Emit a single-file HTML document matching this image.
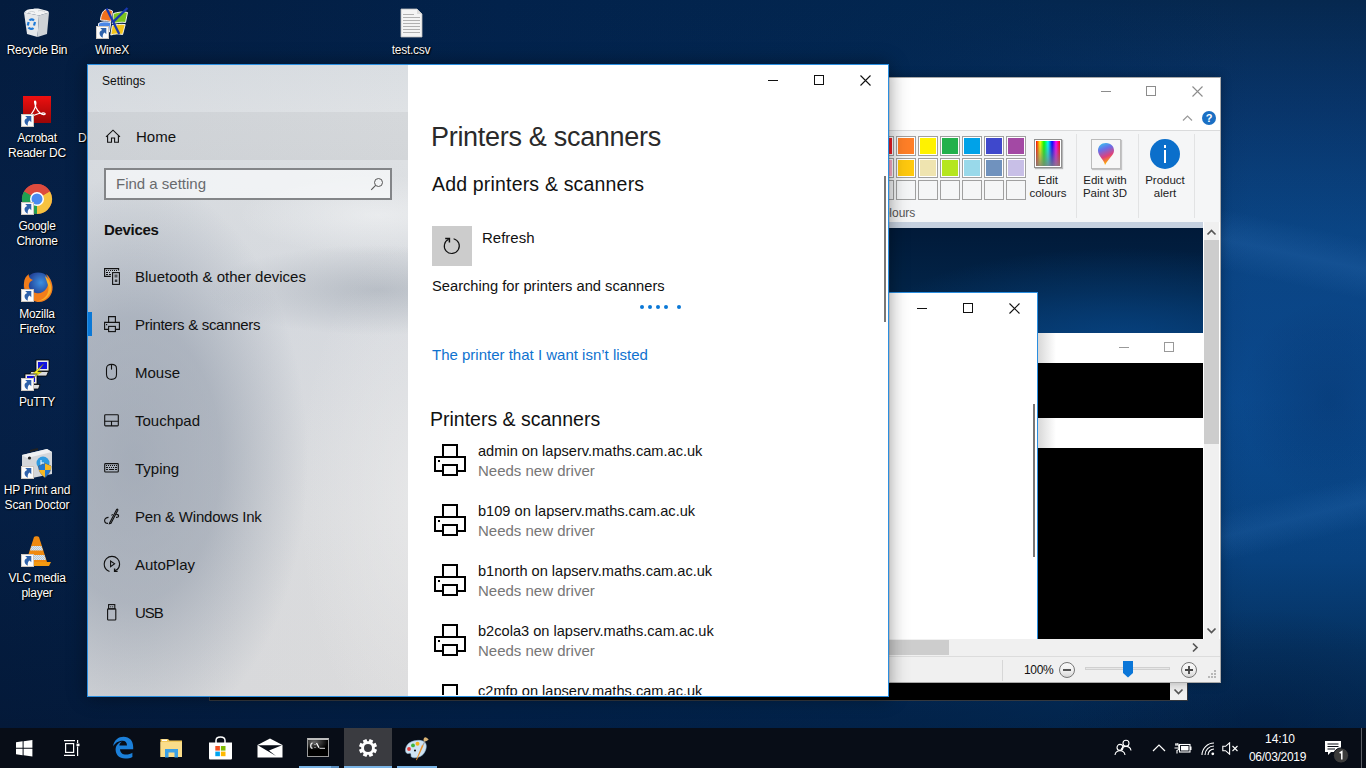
<!DOCTYPE html>
<html><head><meta charset="utf-8">
<style>
*{box-sizing:border-box;margin:0;padding:0}
html,body{width:1366px;height:768px;overflow:hidden}
body{position:relative;font-family:"Liberation Sans",sans-serif;background:#021c3c}
.a{position:absolute}
#desk{left:0;top:0;width:1366px;height:768px;
background:
 linear-gradient(180deg, rgba(12,50,110,0.0) 0px, rgba(12,50,110,0.22) 330px, rgba(12,50,110,0.1) 520px, rgba(0,5,20,0.12) 728px),
 linear-gradient(90deg, #041c3e 0px, #02224b 500px, rgba(2,38,80,0.9) 900px, rgba(4,40,84,0) 1250px),
 linear-gradient(180deg, #06284f 0px, #08356a 110px, #0a4888 230px, #0a4e94 400px, #084482 560px, #053566 650px, #032c58 728px);
}
.t{line-height:1;white-space:nowrap}
.ico-t{color:#fff;font-size:12px;letter-spacing:-0.25px;line-height:15px;text-align:center;text-shadow:0 0 2px #000,1px 1px 1px #000;width:76px}
</style></head><body>
<div id="desk" class="a"></div>
<div class="a" style="left:0;top:0;width:1366px;height:728px;overflow:hidden">
 <div class="a" style="left:1000px;top:215px;width:500px;height:60px;transform:rotate(12deg);background:linear-gradient(180deg,rgba(70,140,215,0) 0%,rgba(70,140,215,0.16) 50%,rgba(70,140,215,0) 100%)"></div>
 <div class="a" style="left:1000px;top:505px;width:500px;height:50px;transform:rotate(-14deg);background:linear-gradient(180deg,rgba(70,140,215,0) 0%,rgba(70,140,215,0.14) 50%,rgba(70,140,215,0) 100%)"></div>
 <div class="a" style="left:1220px;top:300px;width:146px;height:200px;background:radial-gradient(ellipse 90px 100px at 110px 100px, rgba(0,20,60,0.18), rgba(0,20,60,0))"></div>
 <div class="a" style="left:1000px;top:560px;width:366px;height:168px;background:radial-gradient(ellipse 200px 120px at 260px 168px, rgba(0,15,45,0.3), rgba(0,15,45,0))"></div>
</div>

<!-- desktop icons -->
<svg class="a" style="left:0;top:0" width="460" height="620" viewBox="0 0 460 620">
<defs>
 <g id="sc"><rect x="0.5" y="0.5" width="12" height="12" fill="#fbfbfb" stroke="#cfc8c0"/><path d="M4.2 2 H10.3 V8.3 L8.6 6.6 C7.2 7.6 6.4 9.2 6.8 11.8 C4.4 10.6 3.2 8.6 3.6 6.6 C3.9 5.4 5 4.4 6.2 3.9 Z" fill="#2f62aa"/></g>
 <radialGradient id="ffg" cx="0.6" cy="0.35" r="0.6"><stop offset="0" stop-color="#3d8fe0"/><stop offset="0.7" stop-color="#23459a"/><stop offset="1" stop-color="#1c3b7a"/></radialGradient>
 <linearGradient id="acr" x1="0" y1="0" x2="0" y2="1"><stop offset="0" stop-color="#ee1010"/><stop offset="1" stop-color="#9a0606"/></linearGradient>
 <pattern id="chk" width="2" height="2" patternUnits="userSpaceOnUse"><rect width="2" height="2" fill="#dde8f0"/><rect width="1" height="1" fill="#b8c6d2"/><rect x="1" y="1" width="1" height="1" fill="#b8c6d2"/></pattern>
</defs>
<!-- recycle bin -->
<path d="M24 12.5 L39 15.5 L37.5 37 L27 34 Z" fill="#e6e8ea"/>
<path d="M39 15.5 L49 12.5 L47 34 L37.5 37 Z" fill="#cfd3d7"/>
<path d="M24 12.5 C26 9.5 30 8.5 33 9 C36 8 41 9 44 10 C47 10.5 49 11.5 49 12.5 L39 15.5 Z" fill="#f2f3f4"/>
<path d="M28 13 C30 11 33 11 35 12.5 M38 11 C40 10 43 10.5 45 12" stroke="#c4c8cc" stroke-width="0.8" fill="none"/>
<path d="M29.5 20.5 C30.5 19 32.5 19 34 20.5 M35 22 L34 25.5 M33.5 28 C32 29.5 29.5 29 28.5 27.5 M27.8 25.5 L28.6 22" fill="none" stroke="#1e7ad8" stroke-width="2.2"/>
<!-- winex -->
<g stroke="#fff" stroke-width="0.9">
<path d="M100.5 20 C101 14.5 103 10.5 106 9.5 C108 9.2 110.5 10 112.5 11 L111 21.5 C107.5 20.6 104 20.2 100.5 20 Z" fill="#f0701c"/>
<path d="M98.5 23.5 C101.5 21.5 106 21.5 110.8 22.6 L109.4 32 C106 31 102 31 98.5 32 Z" fill="#4a86e6"/>
<path d="M113.5 13.5 C117 12.5 123.5 11 127.5 12.5 L125.5 22.5 C121 21.8 116.5 22.6 112.4 23.8 Z" fill="#7cc420"/>
<path d="M112.2 25.6 C116 24.5 121 24 125.2 24.6 L122.6 34.5 C119 33.5 114.5 33.8 110.8 35 Z" fill="#f2c41a"/>
</g>
<path d="M106.6 8.5 L119.2 34" stroke="#1838b0" stroke-width="2.3" fill="none"/>
<path d="M127.5 8 L113.2 21.8" stroke="#1838b0" stroke-width="2.3" fill="none"/>
<use href="#sc" x="96" y="26"/>
<!-- test.csv -->
<path d="M401 9 H417 L422 14 V37 H401 Z" fill="#f4f4f4" stroke="#bdbdbd" stroke-width="0.8"/>
<path d="M417 9 V14 H422" fill="#dcdcdc"/>
<path d="M403 14.5H414M403 17.5H420M403 20.5H420M403 23.5H420M403 26.5H420M403 29.5H420M403 32.5H420" stroke="#a9a9a9" stroke-width="0.9"/>
<!-- acrobat -->
<rect x="23" y="96" width="28" height="27" fill="url(#acr)"/>
<path d="M35 101 C36.5 101 36 106 34 110 C32 114 29 117 27.5 118.5 C31 116.5 37 113.5 42 113 C45 112.5 46 114 44.5 114.5 C42 115.5 38 112 36 107.5 C35 104.5 34 101 35 101 Z" fill="none" stroke="#fff" stroke-width="1.2"/>
<use href="#sc" x="21" y="114"/>
<!-- chrome -->
<circle cx="37" cy="199" r="15" fill="#dd4b3e"/>
<path d="M37 199 L50 191.5 A15 15 0 0 1 37 214 Z" fill="#f6c240"/>
<path d="M37 199 L37 214 A15 15 0 0 1 24 191.5 Z" fill="#21a052"/>
<path d="M37 199 L24 191.5 A15 15 0 0 1 50 191.5 Z" fill="#dd4b3e"/>
<path d="M37 206 L30.9 195.5 L24 191.5 L30 204 Z" fill="#21a052"/>
<path d="M43.1 195.5 L50 191.5 L44 205 L37 214 Z" fill="#f6c240"/>
<circle cx="37" cy="199" r="7" fill="#fff"/><circle cx="37" cy="199" r="5.5" fill="#4a8af0"/>
<use href="#sc" x="21" y="202"/>
<!-- firefox -->
<circle cx="38" cy="287" r="14.5" fill="url(#ffg)"/>
<path d="M24 283 C23 292 30 302 39 302 C47 302 53 295 52.5 287 C52 281 49 276 46 274 C49 279 49 285 46 289 C44 292 40 294 36 293 C31 292 28 288 29 284 C30 281 33 280 33 280 C30 279 28 276 29 274 C26 276 24 279 24 283 Z" fill="#f27d1a"/>
<path d="M45 276 C50 280 52 286 51 291 C49 297 44 301 38 301 C46 299 50 292 48 285 Z" fill="#fbb02a"/>
<use href="#sc" x="21" y="289"/>
<!-- putty -->
<rect x="36" y="360" width="13" height="11" fill="#e8e8e8" stroke="#000" stroke-width="0.8"/><rect x="38" y="362" width="9" height="7" fill="#1010e0"/>
<path d="M31 371.5 H48.5 L46.5 376 H29 Z" fill="#dcdcdc" stroke="#000" stroke-width="0.8"/>
<rect x="25" y="374" width="12" height="10" fill="#e8e8e8" stroke="#000" stroke-width="0.8"/><rect x="27" y="376" width="8" height="6" fill="#1010e0"/>
<path d="M25 384.5 H40 L38.5 389 H24 Z" fill="#dcdcdc" stroke="#000" stroke-width="0.8"/>
<path d="M43.5 364 L33 373.5 L37.5 373.5 L32.5 378.5 L41.5 372 L37.5 372 Z" fill="#f8f020" stroke="#807a00" stroke-width="0.4"/>
<use href="#sc" x="21" y="378"/>
<!-- hp -->
<path d="M22 455 L47 449 L52 452 V474 L27 479 L22 476 Z" fill="#d3d6da"/>
<path d="M22 455 L47 449 L52 452 L27 458 Z" fill="#eef0f2"/>
<path d="M30 451 L38 449" stroke="#222" stroke-width="2"/><circle cx="29.5" cy="458" r="1.6" fill="#222"/>
<circle cx="43" cy="463" r="6.5" fill="#2e9ae0"/><path d="M41 460 V466 M41 463 H44 V466" stroke="#fff" stroke-width="1" fill="none"/>
<path d="M38.5 466 L45 463.5 L51 466 C51 471 48.5 475 45 477.5 C41.5 475 38.5 471 38.5 466 Z" fill="#1f77d0" stroke="#555" stroke-width="0.6"/>
<path d="M45 463.5 V477.5 M38.5 470 H51" stroke="none"/>
<path d="M45 463.5 L51 466 C51 468 51 469 50.7 470 H45 Z M45 470 V477.5 C42 475 39.5 472.5 39 470 Z" fill="#f6b822"/>
<use href="#sc" x="21" y="466"/>
<!-- vlc -->
<path d="M34 537 C35 536 38 536 39 537 L47 562 H26 Z" fill="#f08a10"/>
<path d="M31.5 546 H41.5 L43 550.5 H30 Z" fill="url(#chk)"/>
<path d="M28.5 555 H44.5 L46 560 H27 Z" fill="url(#chk)"/>
<path d="M22 562 H51 L49 566 H24 Z" fill="#f59a10"/>
<use href="#sc" x="21" y="554"/>
</svg>
<div class="a ico-t" style="left:0;top:43px;width:74px">Recycle Bin</div>
<div class="a ico-t" style="left:74px;top:43px">WineX</div>
<div class="a ico-t" style="left:373px;top:43px">test.csv</div>
<div class="a ico-t" style="left:-1px;top:131px">Acrobat<br>Reader DC</div>
<div class="a ico-t" style="left:78px;top:131px;width:auto;text-align:left">D</div>
<div class="a ico-t" style="left:-1px;top:219px">Google<br>Chrome</div>
<div class="a ico-t" style="left:-1px;top:307px">Mozilla<br>Firefox</div>
<div class="a ico-t" style="left:-1px;top:395px">PuTTY</div>
<div class="a ico-t" style="left:-1px;top:483px;letter-spacing:-0.1px">HP Print and<br>Scan Doctor</div>
<div class="a ico-t" style="left:-1px;top:571px">VLC media<br>player</div>


<!-- console window behind -->
<div class="a" style="left:209px;top:560px;width:979px;height:141px;background:#000;border:1px solid #34383e;border-top:none"></div>
<div class="a" style="left:1170px;top:683px;width:17px;height:17px;background:#f0f0f0"></div>
<svg class="a" style="left:1173px;top:688px" width="11" height="8" viewBox="0 0 11 8"><path d="M1.5 1.5 L5.5 5.5 L9.5 1.5" fill="none" stroke="#555" stroke-width="1.7"/></svg>

<!-- paint window -->
<div class="a" style="left:700px;top:77px;width:521px;height:606px;background:#fff;border:1px solid #a9a9a9;box-shadow:0 0 10px rgba(0,0,0,0.3)"></div>
<!-- title buttons -->
<div class="a" style="left:1101px;top:91px;width:10px;height:1px;background:#8c8c8c"></div>
<div class="a" style="left:1146px;top:86px;width:10px;height:10px;border:1px solid #8c8c8c"></div>
<svg class="a" style="left:1192px;top:86px" width="11" height="11" viewBox="0 0 11 11"><path d="M0.5 0.5 L10.5 10.5 M10.5 0.5 L0.5 10.5" stroke="#8c8c8c" stroke-width="1.1"/></svg>
<svg class="a" style="left:1182px;top:114px" width="11" height="8" viewBox="0 0 11 8"><path d="M1 6.5 L5.5 2 L10 6.5" fill="none" stroke="#9a9a9a" stroke-width="1.2"/></svg>
<div class="a" style="left:1202px;top:111px;width:14px;height:14px;border-radius:7px;background:#1a6fc4;color:#fff;font-size:11px;font-weight:bold;line-height:14px;text-align:center">?</div>
<!-- ribbon -->
<div class="a" style="left:701px;top:130px;width:519px;height:1px;background:#dadbdc"></div>
<div class="a" style="left:701px;top:131px;width:519px;height:91px;background:#f5f6f7"></div>
<div class="a" style="left:874px;top:136px;width:20px;height:20px;border:1px solid #a0a0a0;background:#ed1c24;box-shadow:inset 0 0 0 1px #fff"></div>
<div class="a" style="left:896px;top:136px;width:20px;height:20px;border:1px solid #a0a0a0;background:#ff7f27;box-shadow:inset 0 0 0 1px #fff"></div>
<div class="a" style="left:918px;top:136px;width:20px;height:20px;border:1px solid #a0a0a0;background:#fff200;box-shadow:inset 0 0 0 1px #fff"></div>
<div class="a" style="left:940px;top:136px;width:20px;height:20px;border:1px solid #a0a0a0;background:#22b14c;box-shadow:inset 0 0 0 1px #fff"></div>
<div class="a" style="left:962px;top:136px;width:20px;height:20px;border:1px solid #a0a0a0;background:#00a2e8;box-shadow:inset 0 0 0 1px #fff"></div>
<div class="a" style="left:984px;top:136px;width:20px;height:20px;border:1px solid #a0a0a0;background:#3f48cc;box-shadow:inset 0 0 0 1px #fff"></div>
<div class="a" style="left:1006px;top:136px;width:20px;height:20px;border:1px solid #a0a0a0;background:#a349a4;box-shadow:inset 0 0 0 1px #fff"></div>
<div class="a" style="left:874px;top:158px;width:20px;height:20px;border:1px solid #a0a0a0;background:#ffaec9;box-shadow:inset 0 0 0 1px #fff"></div>
<div class="a" style="left:896px;top:158px;width:20px;height:20px;border:1px solid #a0a0a0;background:#ffc90e;box-shadow:inset 0 0 0 1px #fff"></div>
<div class="a" style="left:918px;top:158px;width:20px;height:20px;border:1px solid #a0a0a0;background:#efe4b0;box-shadow:inset 0 0 0 1px #fff"></div>
<div class="a" style="left:940px;top:158px;width:20px;height:20px;border:1px solid #a0a0a0;background:#b5e61d;box-shadow:inset 0 0 0 1px #fff"></div>
<div class="a" style="left:962px;top:158px;width:20px;height:20px;border:1px solid #a0a0a0;background:#99d9ea;box-shadow:inset 0 0 0 1px #fff"></div>
<div class="a" style="left:984px;top:158px;width:20px;height:20px;border:1px solid #a0a0a0;background:#7092be;box-shadow:inset 0 0 0 1px #fff"></div>
<div class="a" style="left:1006px;top:158px;width:20px;height:20px;border:1px solid #a0a0a0;background:#c8bfe7;box-shadow:inset 0 0 0 1px #fff"></div>
<div class="a" style="left:874px;top:180px;width:20px;height:20px;border:1px solid #a0a0a0;background:#f5f6f7"></div>
<div class="a" style="left:896px;top:180px;width:20px;height:20px;border:1px solid #a0a0a0;background:#f5f6f7"></div>
<div class="a" style="left:918px;top:180px;width:20px;height:20px;border:1px solid #a0a0a0;background:#f5f6f7"></div>
<div class="a" style="left:940px;top:180px;width:20px;height:20px;border:1px solid #a0a0a0;background:#f5f6f7"></div>
<div class="a" style="left:962px;top:180px;width:20px;height:20px;border:1px solid #a0a0a0;background:#f5f6f7"></div>
<div class="a" style="left:984px;top:180px;width:20px;height:20px;border:1px solid #a0a0a0;background:#f5f6f7"></div>
<div class="a" style="left:1006px;top:180px;width:20px;height:20px;border:1px solid #a0a0a0;background:#f5f6f7"></div>
<div class="a t" style="left:874px;top:207px;font-size:12px;color:#555;width:41px;text-align:right">Colours</div>
<div class="a" style="left:1034px;top:139px;width:28px;height:29px;background:#fff;border:1px solid #8f8f8f;box-shadow:1px 1px 1px rgba(0,0,0,0.25)"></div>
<div class="a" style="left:1036px;top:141px;width:24px;height:25px;background:linear-gradient(180deg,rgba(128,128,128,0) 0%,rgba(128,128,128,0.85) 100%),linear-gradient(90deg,#f00,#ff0 17%,#0f0 33%,#0ff 50%,#00f 67%,#f0f 83%,#f00)"></div>
<div class="a t" style="left:1018px;top:174px;width:60px;text-align:center;font-size:11.5px;color:#222;line-height:13px">Edit<br>colours</div>
<div class="a" style="left:1076px;top:134px;width:1px;height:84px;background:#e2e3e4"></div>
<div class="a" style="left:1091px;top:139px;width:30px;height:30px;background:#f7f7f7;border:1px solid #bcbcbc;box-shadow:1px 1px 1px rgba(0,0,0,0.2)"></div>
<svg class="a" style="left:1096px;top:141px" width="20" height="26" viewBox="0 0 20 26">
 <defs><linearGradient id="p3d" x1="0" y1="0" x2="0.3" y2="1"><stop offset="0" stop-color="#2fd0f0"/><stop offset="0.35" stop-color="#6a6ee8"/><stop offset="0.7" stop-color="#e0407a"/><stop offset="1" stop-color="#ffb000"/></linearGradient></defs>
 <path d="M10 2 C15.5 2 18 6 18 9.5 C18 14 13 17 9 24 C8.5 19 2 15 2 9.5 C2 5.5 5 2 10 2 Z" fill="url(#p3d)"/>
</svg>
<div class="a t" style="left:1075px;top:174px;width:60px;text-align:center;font-size:11.5px;color:#222;line-height:13px">Edit with<br>Paint 3D</div>
<div class="a" style="left:1138px;top:134px;width:1px;height:84px;background:#e2e3e4"></div>
<div class="a" style="left:1150px;top:139px;width:30px;height:30px;border-radius:15px;background:#0b6fcb"></div>
<div class="a" style="left:1164px;top:145px;width:2px;height:3px;background:#fff"></div>
<div class="a" style="left:1164px;top:150px;width:2px;height:13px;background:#fff"></div>
<div class="a t" style="left:1135px;top:174px;width:60px;text-align:center;font-size:11.5px;color:#222;line-height:13px">Product<br>alert</div>
<div class="a" style="left:1194px;top:134px;width:1px;height:84px;background:#e2e3e4"></div>
<div class="a" style="left:701px;top:222px;width:502px;height:6px;background:#c6d1e0"></div>
<!-- canvas -->
<div class="a" style="left:701px;top:228px;width:502px;height:411px;overflow:hidden;background:#000">
 <div class="a" style="left:0;top:0;width:502px;height:110px;background:radial-gradient(ellipse 260px 90px at 420px 110px, rgba(8,70,135,0.75), rgba(8,70,135,0)),linear-gradient(180deg,#011a39 0%,#022448 60%,#03305e 100%)"></div>
 <!-- window1 white (page x 888..1037, y 292..638) -->
 <div class="a" style="left:187px;top:64px;width:150px;height:360px;background:#fff;border-top:1px solid #2a8ee0;border-right:1px solid #2a8ee0"></div>
 <div class="a" style="left:216px;top:80px;width:10px;height:1px;background:#111"></div>
 <div class="a" style="left:262px;top:75px;width:10px;height:10px;border:1px solid #111"></div>
 <svg class="a" style="left:308px;top:75px" width="11" height="11" viewBox="0 0 11 11"><path d="M0.5 0.5 L10.5 10.5 M10.5 0.5 L0.5 10.5" stroke="#111" stroke-width="1.1"/></svg>
 <div class="a" style="left:332px;top:176px;width:2px;height:153px;background:#777"></div>
 <!-- window2 -->
 <div class="a" style="left:337px;top:105px;width:165px;height:30px;background:linear-gradient(90deg,#d8d8d8,#fff 18px)"></div>
 <div class="a" style="left:418px;top:119px;width:10px;height:1px;background:#999"></div>
 <div class="a" style="left:463px;top:114px;width:10px;height:10px;border:1px solid #999"></div>
 <div class="a" style="left:337px;top:135px;width:165px;height:55px;background:#000"></div>
 <div class="a" style="left:337px;top:190px;width:165px;height:30px;background:linear-gradient(90deg,#d8d8d8,#fff 18px)"></div>
 <div class="a" style="left:337px;top:220px;width:165px;height:200px;background:#000"></div>
 <div class="a" style="left:336px;top:105px;width:1px;height:320px;background:#2a8ee0"></div>
</div>
<!-- v scrollbar -->
<div class="a" style="left:1203px;top:222px;width:17px;height:417px;background:#fff"></div>
<div class="a" style="left:1204px;top:222px;width:15px;height:417px;background:#f0f0f0"></div>
<svg class="a" style="left:1206px;top:228px" width="11" height="8" viewBox="0 0 11 8"><path d="M1.5 6.5 L5.5 2.5 L9.5 6.5" fill="none" stroke="#555" stroke-width="1.7"/></svg>
<div class="a" style="left:1204px;top:240px;width:15px;height:204px;background:#cdcdcd"></div>
<svg class="a" style="left:1206px;top:627px" width="11" height="8" viewBox="0 0 11 8"><path d="M1.5 1.5 L5.5 5.5 L9.5 1.5" fill="none" stroke="#555" stroke-width="1.7"/></svg>
<!-- h scrollbar -->
<div class="a" style="left:701px;top:639px;width:519px;height:17px;background:#f0f0f0"></div>
<div class="a" style="left:701px;top:640px;width:248px;height:15px;background:#cdcdcd"></div>
<svg class="a" style="left:1191px;top:642px" width="8" height="11" viewBox="0 0 8 11"><path d="M2 1.5 L6 5.5 L2 9.5" fill="none" stroke="#555" stroke-width="1.7"/></svg>
<!-- status bar -->
<div class="a" style="left:701px;top:656px;width:519px;height:1px;background:#dcdcdc"></div>
<div class="a" style="left:701px;top:657px;width:519px;height:25px;background:#f0f0f0"></div>
<div class="a" style="left:1002px;top:660px;width:1px;height:21px;background:#d7d7d7"></div>
<div class="a t" style="left:1024px;top:664px;font-size:12px;color:#111;letter-spacing:-0.3px">100%</div>
<svg class="a" style="left:1058px;top:661px" width="18" height="18" viewBox="0 0 18 18"><defs><linearGradient id="zg" x1="0" y1="0" x2="0" y2="1"><stop offset="0" stop-color="#fafafa"/><stop offset="0.55" stop-color="#f0f0f0"/><stop offset="1" stop-color="#d4d4d4"/></linearGradient></defs><circle cx="9" cy="9" r="7.5" fill="url(#zg)" stroke="#777" stroke-width="1"/><path d="M5 9 H13" stroke="#444" stroke-width="1.8"/></svg>
<div class="a" style="left:1085px;top:667px;width:85px;height:3px;background:#e6e6e6;border:1px solid #d0d0d0"></div>
<svg class="a" style="left:1122px;top:660px" width="12" height="18" viewBox="0 0 12 18"><path d="M1 1 H11 V13 L6 17.5 L1 13 Z" fill="#0a76d8"/></svg>
<svg class="a" style="left:1180px;top:661px" width="18" height="18" viewBox="0 0 18 18"><circle cx="9" cy="9" r="7.5" fill="url(#zg)" stroke="#777" stroke-width="1"/><path d="M5 9 H13 M9 5 V13" stroke="#444" stroke-width="1.8"/></svg>
<svg class="a" style="left:1205px;top:669px" width="12" height="12" viewBox="0 0 12 12" fill="#b8b8b8"><rect x="9" y="1" width="2" height="2"/><rect x="6" y="4" width="2" height="2"/><rect x="9" y="4" width="2" height="2"/><rect x="3" y="7" width="2" height="2"/><rect x="6" y="7" width="2" height="2"/><rect x="9" y="7" width="2" height="2"/></svg>
<!-- shadow from settings -->
<div class="a" style="left:889px;top:77px;width:1px;height:605px;background:rgba(120,90,70,0.18)"></div>

<!-- settings window -->
<div class="a" style="left:87px;top:64px;width:802px;height:633px;border:1px solid #2a8ee0;background:#fff;box-shadow:0 0 18px rgba(0,0,0,0.42)"></div>
<div id="lp" class="a" style="left:88px;top:65px;width:320px;height:631px;overflow:hidden;
background:
 radial-gradient(ellipse 175px 285px at 45px 395px, rgba(125,137,155,0.55) 0%, rgba(125,137,155,0.45) 50%, rgba(125,137,155,0) 100%),
 radial-gradient(ellipse 120px 260px at 330px 430px, rgba(240,240,240,0.5), rgba(240,240,240,0)),
 linear-gradient(90deg, rgba(200,206,214,0.3) 0px, rgba(226,229,232,0.0) 320px),
 linear-gradient(180deg,#dadee2 0px,#dfe2e5 47px,#dcdfe2 120px,#d7dadf 250px,#dcdddf 450px,#dbdbdc 631px)">
 <div class="a" style="left:0;top:0;width:320px;height:631px;background:radial-gradient(ellipse 170px 45px at 290px 225px, rgba(135,145,158,0.4), rgba(135,145,158,0)),radial-gradient(ellipse 140px 40px at 290px 150px, rgba(248,249,250,0.5), rgba(248,249,250,0))"></div>
</div>
<div class="a" style="left:88px;top:112px;width:320px;height:48px;background:rgba(0,0,0,0.045)"></div>
<div class="a t" style="left:102px;top:75px;font-size:12px;color:#111">Settings</div>
<svg class="a" style="left:100px;top:124px" width="24" height="24" viewBox="0 0 24 24" fill="none" stroke="#111" stroke-width="1.1"><path d="M6 12.8 L13 6.2 L20 12.8"/><path d="M7.6 11.6 V18.3 H11.5 V14 H14.6 V18.3 H18.4 V11.6"/></svg>
<div class="a t" style="left:136px;top:129px;font-size:15px;color:#111">Home</div>
<div class="a" style="left:104px;top:168px;width:288px;height:32px;border:2px solid #838588;background:rgba(250,251,252,0.7)"></div>
<div class="a t" style="left:116px;top:176px;font-size:15px;color:#686a6d">Find a setting</div>
<svg class="a" style="left:370px;top:177px" width="14" height="14" viewBox="0 0 14 14"><circle cx="8.5" cy="5.5" r="4" fill="none" stroke="#555" stroke-width="1"/><path d="M5.6 8.4 L1.2 12.8" stroke="#555" stroke-width="1.1"/></svg>
<div class="a t" style="left:104px;top:222px;font-size:15px;font-weight:bold;color:#111;letter-spacing:-0.3px">Devices</div>

<div class="a" style="left:88px;top:312px;width:4px;height:24px;background:#0a78d6"></div>
<div class="a t" style="left:135px;top:269px;font-size:15px;color:#111">Bluetooth &amp; other devices</div>
<div class="a t" style="left:135px;top:317px;font-size:15px;color:#111;letter-spacing:-0.3px">Printers &amp; scanners</div>
<div class="a t" style="left:135px;top:365px;font-size:15px;color:#111">Mouse</div>
<div class="a t" style="left:135px;top:413px;font-size:15px;color:#111">Touchpad</div>
<div class="a t" style="left:135px;top:461px;font-size:15px;color:#111">Typing</div>
<div class="a t" style="left:135px;top:509px;font-size:15px;color:#111;letter-spacing:-0.2px">Pen &amp; Windows Ink</div>
<div class="a t" style="left:135px;top:557px;font-size:15px;color:#111">AutoPlay</div>
<div class="a t" style="left:135px;top:605px;font-size:15px;color:#111;letter-spacing:-1px">USB</div>
<!-- nav icons -->
<svg class="a" style="left:100px;top:263px" width="24" height="24" viewBox="0 0 24 24" fill="none" stroke="#111" stroke-width="1.1">
 <path d="M10.8 13.4 H4.6 V5.6 H18.6 V7.6"/><rect x="12.6" y="9.6" width="6.8" height="11.8"/>
 <g fill="#111" stroke="none"><rect x="6" y="7" width="1" height="1"/><rect x="8" y="7" width="1" height="1"/><rect x="10" y="7" width="1" height="1"/><rect x="12" y="7" width="1" height="1"/><rect x="14" y="7" width="1" height="1"/><rect x="16" y="7" width="1" height="1"/>
 <rect x="6" y="9" width="2" height="1"/><rect x="9" y="9" width="1" height="1"/><rect x="6" y="11" width="2" height="1"/><rect x="9" y="11" width="2" height="1"/>
 <rect x="14.5" y="11.5" width="3" height="3" opacity="0.6"/><rect x="14.8" y="16.5" width="2.5" height="2.5" opacity="0.75"/></g>
</svg>
<svg class="a" style="left:100px;top:311px" width="24" height="24" viewBox="0 0 24 24" fill="none" stroke="#111" stroke-width="1.1">
 <path d="M8.6 11 V5.6 H15.4 V11"/><path d="M8.6 18.4 H4.6 V11.4 H19.4 V18.4 H15.4"/><rect x="8.6" y="15.4" width="6.8" height="5.2"/><rect x="6" y="13" width="1.2" height="1.2" fill="#111" stroke="none"/>
</svg>
<svg class="a" style="left:100px;top:359px" width="24" height="24" viewBox="0 0 24 24" fill="none" stroke="#111" stroke-width="1.1">
 <path d="M6.5 9.5 C6.5 6.5 8.5 5.4 11.5 5.4 C14.5 5.4 16.5 6.5 16.5 9.5 V15.5 C16.5 18.5 14.5 20.4 11.5 20.4 C8.5 20.4 6.5 18.5 6.5 15.5 Z"/><path d="M11.5 5.4 V10.6"/>
</svg>
<svg class="a" style="left:100px;top:407px" width="24" height="24" viewBox="0 0 24 24" fill="none" stroke="#111" stroke-width="1.1">
 <rect x="4.7" y="7.7" width="13.6" height="11.2" rx="0.8"/><path d="M4.7 14.3 H18.3 M11.5 14.3 V18.9"/>
</svg>
<svg class="a" style="left:100px;top:455px" width="24" height="24" viewBox="0 0 24 24" fill="none" stroke="#111" stroke-width="1.1">
 <rect x="4.7" y="8.6" width="13.6" height="8.4" rx="0.8"/>
 <g fill="#111" stroke="none"><rect x="6" y="10" width="1" height="1"/><rect x="8" y="10" width="1" height="1"/><rect x="10" y="10" width="1" height="1"/><rect x="12" y="10" width="1" height="1"/><rect x="14" y="10" width="1" height="1"/><rect x="16" y="10" width="1" height="1"/>
 <rect x="6" y="12" width="2" height="1"/><rect x="9" y="12" width="1" height="1"/><rect x="11" y="12" width="1" height="1"/><rect x="13" y="12" width="1" height="1"/><rect x="15" y="12" width="2" height="1"/>
 <rect x="6" y="14" width="2" height="1"/><rect x="9" y="14" width="5" height="1"/><rect x="15" y="14" width="2" height="1"/></g>
</svg>
<svg class="a" style="left:100px;top:505px" width="24" height="24" viewBox="0 0 24 24" fill="none" stroke="#111" stroke-width="1.1">
 <path d="M9.6 18 L16.6 4.6 C17.2 3.8 18.2 4.2 17.8 5.2 L11 18.2 L9.4 18.6 Z"/><path d="M11.4 10.4 L12.8 9.4"/>
 <path d="M8.5 12.4 C6.5 12.4 4.6 13.6 4.6 15.4 C4.6 17.4 6.4 18.4 8 18.4"/><path d="M16.2 9.4 C17.6 9.4 18.6 10 18.6 11 C18.6 12 17.6 12.4 16 12.4"/>
</svg>
<svg class="a" style="left:100px;top:553px" width="24" height="24" viewBox="0 0 24 24" fill="none" stroke="#111" stroke-width="1.1">
 <path d="M9.5 18.4 C6.5 17.4 4.2 14.5 4.2 11 C4.2 6.7 7.6 3.4 12 3.4 C16.3 3.4 19.6 6.8 19.6 11 C19.6 13.6 18.3 15.8 16.6 17.2"/>
 <path d="M10.6 8 V13.6 L14.6 10.8 Z"/><path d="M14.6 15.6 V18.4 H17.6" stroke-width="1.4"/><path d="M14.6 18.4 L16.8 16.4" stroke-width="1.2"/>
</svg>
<svg class="a" style="left:100px;top:601px" width="24" height="24" viewBox="0 0 24 24" fill="none" stroke="#111" stroke-width="1.1">
 <rect x="8.6" y="3.6" width="6.2" height="4.4"/><rect x="7.6" y="7.8" width="8.2" height="11.2" rx="0.8"/>
 <rect x="10.2" y="5.3" width="1" height="1" fill="#111" stroke="none"/><rect x="12.2" y="5.3" width="1" height="1" fill="#111" stroke="none"/>
</svg>
<!-- right pane -->
<div class="a" style="left:768px;top:80px;width:10px;height:1px;background:#111"></div>
<div class="a" style="left:814px;top:75px;width:10px;height:10px;border:1px solid #111"></div>
<svg class="a" style="left:860px;top:75px" width="11" height="11" viewBox="0 0 11 11"><path d="M0.5 0.5 L10.5 10.5 M10.5 0.5 L0.5 10.5" stroke="#111" stroke-width="1.1"/></svg>

<div class="a t" style="left:431px;top:124px;font-size:27px;letter-spacing:-0.3px;color:#2a2a2a">Printers &amp; scanners</div>
<div class="a t" style="left:432px;top:175px;font-size:19.5px;letter-spacing:0.18px;color:#111">Add printers &amp; scanners</div>
<div class="a" style="left:432px;top:226px;width:40px;height:40px;background:#cccccc"></div>
<svg class="a" style="left:441px;top:236px" width="20" height="20" viewBox="0 0 20 20" fill="none" stroke="#111" stroke-width="1.15"><path d="M12.6 2.7 A7.5 7.5 0 1 1 7.6 3.2"/><path d="M4.2 2.4 H8.4 V6.4" stroke-width="1.5"/></svg>
<div class="a t" style="left:482px;top:230px;font-size:15px;color:#111">Refresh</div>
<div class="a t" style="left:432px;top:279px;font-size:14.7px;color:#111">Searching for printers and scanners</div>
<div class="a" style="left:640px;top:305px;width:4px;height:4px;border-radius:2px;background:#0a78d6"></div>
<div class="a" style="left:648px;top:305px;width:4px;height:4px;border-radius:2px;background:#0a78d6"></div>
<div class="a" style="left:656px;top:305px;width:4px;height:4px;border-radius:2px;background:#0a78d6"></div>
<div class="a" style="left:664px;top:305px;width:4px;height:4px;border-radius:2px;background:#0a78d6"></div>
<div class="a" style="left:677px;top:305px;width:4px;height:4px;border-radius:2px;background:#0a78d6"></div>
<div class="a t" style="left:432px;top:347px;font-size:15px;color:#0f72cf">The printer that I want isn’t listed</div>
<div class="a t" style="left:430px;top:410px;font-size:19.5px;color:#111">Printers &amp; scanners</div>

<div id="plist" class="a" style="left:408px;top:436px;width:476px;height:259px;overflow:hidden">
<svg class="a" style="left:26px;top:8px" width="32" height="32" viewBox="0 0 32 32" fill="none" stroke="#000" stroke-width="2"><path d="M9 13 V1 H23 V13"/><path d="M9 27 H1 V13 H31 V27 H23"/><rect x="9" y="21" width="14" height="10"/><rect x="4" y="16" width="2" height="2" fill="#000" stroke="none"/></svg>
<div class="a t" style="left:70px;top:8px;font-size:14.6px;color:#111">admin on lapserv.maths.cam.ac.uk</div>
<div class="a t" style="left:70px;top:27px;font-size:15px;color:#767676">Needs new driver</div>
<svg class="a" style="left:26px;top:68px" width="32" height="32" viewBox="0 0 32 32" fill="none" stroke="#000" stroke-width="2"><path d="M9 13 V1 H23 V13"/><path d="M9 27 H1 V13 H31 V27 H23"/><rect x="9" y="21" width="14" height="10"/><rect x="4" y="16" width="2" height="2" fill="#000" stroke="none"/></svg>
<div class="a t" style="left:70px;top:68px;font-size:14.6px;color:#111">b109 on lapserv.maths.cam.ac.uk</div>
<div class="a t" style="left:70px;top:87px;font-size:15px;color:#767676">Needs new driver</div>
<svg class="a" style="left:26px;top:128px" width="32" height="32" viewBox="0 0 32 32" fill="none" stroke="#000" stroke-width="2"><path d="M9 13 V1 H23 V13"/><path d="M9 27 H1 V13 H31 V27 H23"/><rect x="9" y="21" width="14" height="10"/><rect x="4" y="16" width="2" height="2" fill="#000" stroke="none"/></svg>
<div class="a t" style="left:70px;top:128px;font-size:14.6px;color:#111">b1north on lapserv.maths.cam.ac.uk</div>
<div class="a t" style="left:70px;top:147px;font-size:15px;color:#767676">Needs new driver</div>
<svg class="a" style="left:26px;top:188px" width="32" height="32" viewBox="0 0 32 32" fill="none" stroke="#000" stroke-width="2"><path d="M9 13 V1 H23 V13"/><path d="M9 27 H1 V13 H31 V27 H23"/><rect x="9" y="21" width="14" height="10"/><rect x="4" y="16" width="2" height="2" fill="#000" stroke="none"/></svg>
<div class="a t" style="left:70px;top:188px;font-size:14.6px;color:#111">b2cola3 on lapserv.maths.cam.ac.uk</div>
<div class="a t" style="left:70px;top:207px;font-size:15px;color:#767676">Needs new driver</div>
<svg class="a" style="left:26px;top:248px" width="32" height="32" viewBox="0 0 32 32" fill="none" stroke="#000" stroke-width="2"><path d="M9 13 V1 H23 V13"/><path d="M9 27 H1 V13 H31 V27 H23"/><rect x="9" y="21" width="14" height="10"/><rect x="4" y="16" width="2" height="2" fill="#000" stroke="none"/></svg>
<div class="a t" style="left:70px;top:248px;font-size:14.6px;color:#111">c2mfp on lapserv.maths.cam.ac.uk</div>
<div class="a t" style="left:70px;top:267px;font-size:15px;color:#767676">Needs new driver</div>
</div>
<div class="a" style="left:884px;top:176px;width:2px;height:146px;background:#777"></div>

<!-- taskbar -->
<div class="a" style="left:0;top:728px;width:1366px;height:40px;background:#080d17"></div>
<!-- start -->
<svg class="a" style="left:16px;top:740px" width="17" height="17" viewBox="0 0 17 17" fill="#fff">
 <path d="M0 2.3 L6.6 1.3 V7.7 H0 Z M7.6 1.15 L16.4 0 V7.7 H7.6 Z M0 8.7 H6.6 V15.2 L0 14.3 Z M7.6 8.7 H16.4 V16.5 L7.6 15.3 Z"/>
</svg>
<!-- task view -->
<svg class="a" style="left:63px;top:739px" width="18" height="18" viewBox="0 0 18 18" fill="none" stroke="#fff" stroke-width="1.2">
 <path d="M1 1.6 H12 M1 16.4 H12"/><rect x="2.6" y="4.6" width="8" height="8.8"/><path d="M14.6 1 V4 M14.6 7.5 V17"/><rect x="13.5" y="4.6" width="3" height="2.6" fill="#fff" stroke="none"/>
</svg>
<!-- edge -->
<svg class="a" style="left:112px;top:736px" width="22" height="23" viewBox="0 0 22 23">
 <path d="M1 10.5 C2 4 6.5 0.8 11.6 0.8 C17.5 0.8 21.2 5 21.2 11 V13.2 H8 C8.2 16.8 10.8 18.6 14 18.6 C16.6 18.6 18.8 17.8 20.4 16.8 V21 C18.6 22 16 22.6 13.2 22.6 C7 22.6 3.6 18.6 3.6 13.6 C3.6 9.4 6.3 6.4 10.2 5.4 C8 6.6 7.4 8.2 7.4 9.5 H15 C15 6.6 13.4 4.8 10.6 4.8 C6.4 4.8 3 7.2 1 10.5 Z" fill="#1b7fd9"/>
</svg>
<!-- explorer -->
<svg class="a" style="left:160px;top:738px" width="23" height="20" viewBox="0 0 23 20">
 <path d="M0.5 1 H8 L9.5 2.5 H22 V19 H0.5 Z" fill="#f1c85a"/><path d="M0.5 4 H22 V19 H0.5 Z" fill="#fadd8a"/><rect x="2" y="1.6" width="5" height="1.4" fill="#fff"/>
 <path d="M5 19.5 V11 H18 V19.5 H14.5 V14.5 H8.5 V19.5 Z" fill="#3aa0e6"/>
</svg>
<!-- store -->
<svg class="a" style="left:208px;top:736px" width="25" height="24" viewBox="0 0 25 24">
 <path d="M8 7 V4.5 C8 2 10 1 12.5 1 C15 1 17 2 17 4.5 V7" fill="none" stroke="#fff" stroke-width="1.5"/>
 <path d="M1 6.5 H24 V22 C24 23 23.5 23.5 22.5 23.5 H2.5 C1.5 23.5 1 23 1 22 Z" fill="#fff"/>
 <rect x="7.3" y="10" width="4.6" height="4.6" fill="#f25022"/><rect x="12.9" y="10" width="4.6" height="4.6" fill="#7fba00"/>
 <rect x="7.3" y="15.6" width="4.6" height="4.6" fill="#00a4ef"/><rect x="12.9" y="15.6" width="4.6" height="4.6" fill="#ffb900"/>
</svg>
<!-- mail -->
<svg class="a" style="left:257px;top:738px" width="26" height="20" viewBox="0 0 26 20">
 <path d="M0.5 7 L13 0.5 L25.5 7 V19.5 H0.5 Z" fill="#fff"/><path d="M0.8 7.3 L25 7.3 L12 12.5 L19 18 Z" fill="#080d17"/>
</svg>
<!-- cmd -->
<div class="a" style="left:307px;top:738px;width:22px;height:19px;background:radial-gradient(ellipse 14px 8px at 6px 2px,#6a6a6a,#000 100%);border:1px solid #9c9c9c;border-top:2px solid #bdbdbd"></div>
<svg class="a" style="left:309px;top:742px" width="18" height="8" viewBox="0 0 18 8"><path d="M3.6 1.2 C1.2 0.8 1 6.6 3.6 6.2" fill="none" stroke="#eee" stroke-width="1.3"/><rect x="5.5" y="2" width="1" height="1" fill="#ddd"/><rect x="5.5" y="5" width="1" height="1" fill="#ddd"/><path d="M7.5 1 L10 5.8" stroke="#fff" stroke-width="1.3"/><path d="M10.5 6.3 H16" stroke="#ddd" stroke-width="1"/></svg>
<!-- settings active -->
<div class="a" style="left:344px;top:728px;width:48px;height:40px;background:#3a3b40"></div>
<svg class="a" style="left:358px;top:738px" width="20" height="20" viewBox="-10 -10 20 20"><path d="M6.77 0.65 L9.05 1.68 L7.58 5.21 L5.25 4.33 L4.33 5.25 L5.21 7.58 L1.68 9.05 L0.65 6.77 L-0.65 6.77 L-1.68 9.05 L-5.21 7.58 L-4.33 5.25 L-5.25 4.33 L-7.58 5.21 L-9.05 1.68 L-6.77 0.65 L-6.77 -0.65 L-9.05 -1.68 L-7.58 -5.21 L-5.25 -4.33 L-4.33 -5.25 L-5.21 -7.58 L-1.68 -9.05 L-0.65 -6.77 L0.65 -6.77 L1.68 -9.05 L5.21 -7.58 L4.33 -5.25 L5.25 -4.33 L7.58 -5.21 L9.05 -1.68 L6.77 -0.65 Z" fill="#fff"/><circle r="4" fill="#3a3b40"/></svg>
<!-- paint -->
<svg class="a" style="left:396px;top:730px" width="44" height="36" viewBox="0 0 44 36">
 <path d="M10.5 23 C8.5 21 9.5 15 14 12.5 C18.5 10 25.5 9.5 28.5 12 C31.5 14.5 30.5 20.5 27 24.5 C23.5 27.8 18 28.5 15.5 27 C14.6 26.4 15.5 24.5 14.6 23.6 C13.6 22.6 12 24.4 10.5 23 Z" fill="#cfe3f2" stroke="#8fb8d8" stroke-width="0.6"/>
 <circle cx="13" cy="19" r="1.9" fill="#e23a3a"/><circle cx="17" cy="15.4" r="1.9" fill="#3cb43c"/><circle cx="21.5" cy="13.8" r="2" fill="#f4b21c"/><circle cx="19" cy="20.4" r="1" fill="#000"/>
 <path d="M20 30 L26 15 L27.6 15.6 L20.8 30.2 Z" fill="#e8902a"/><path d="M26.4 14.8 L28.6 11 L29.4 11.4 L27.6 15.4 Z" fill="#a0a0a0"/>
 <path d="M28 11.5 C27 10 27.5 8 29 7.2 C30.5 7.5 32.5 8.6 32.6 9.8 C31.5 10.6 29.6 11.6 28 11.5 Z" fill="#d9b274"/>
</svg>
<!-- underlines -->
<div class="a" style="left:299px;top:766px;width:32px;height:2px;background:#7ab4e6"></div>
<div class="a" style="left:331px;top:766px;width:8px;height:2px;background:#5a8ec0"></div>
<div class="a" style="left:344px;top:766px;width:48px;height:2px;background:#7ab4e6"></div>
<div class="a" style="left:397px;top:766px;width:40px;height:2px;background:#7ab4e6"></div>
<!-- tray -->
<svg class="a" style="left:1114px;top:739px" width="18" height="17" viewBox="0 0 18 17" fill="none" stroke="#fff" stroke-width="1.1">
 <circle cx="12" cy="4.2" r="3"/><path d="M7 11.5 C7.5 8.5 9.5 7.4 12 7.4 C14.5 7.4 16.5 8.5 17 11.5"/><circle cx="6" cy="8.4" r="3"/><path d="M1 16 C1.5 13 3.5 11.8 6 11.8 C8.5 11.8 10.5 13 11 16"/>
</svg>
<svg class="a" style="left:1152px;top:743px" width="14" height="9" viewBox="0 0 14 9"><path d="M1 8 L7 2 L13 8" fill="none" stroke="#fff" stroke-width="1.2"/></svg>
<svg class="a" style="left:1174px;top:742px" width="18" height="12" viewBox="0 0 18 12" fill="none" stroke="#fff" stroke-width="1.1">
 <rect x="5.5" y="2.5" width="10.5" height="7.5"/><rect x="16" y="4.5" width="1.5" height="3.5" fill="#fff" stroke="none"/><rect x="7" y="4" width="7.5" height="4.5" fill="#fff" stroke="none"/>
 <path d="M0.5 6 H4 M2 3 V1 M3.8 3 V1 M1 3 H4.8 V6.5 C4.8 8 3 8.5 3 8.5 V11.5"/>
</svg>
<svg class="a" style="left:1201px;top:742px" width="15" height="14" viewBox="0 0 15 14" fill="none" stroke="#fff" stroke-width="1.1">
 <path d="M1 13 C1 6.5 6.5 1 13 1"/><path d="M4 13 C4 8 8 4 13 4"/><path d="M7 13 C7 9.7 9.7 7 13 7"/><circle cx="11.8" cy="11.8" r="1.4" fill="#fff" stroke="none"/>
</svg>
<svg class="a" style="left:1222px;top:742px" width="17" height="13" viewBox="0 0 17 13" fill="none" stroke="#fff" stroke-width="1.1">
 <path d="M0.8 4.3 H3.6 L7.6 0.8 V12.2 L3.6 8.7 H0.8 Z"/><path d="M10.5 4 L15.5 9 M15.5 4 L10.5 9"/>
</svg>
<div class="a t" style="left:1265px;top:733px;font-size:12px;color:#fff">14:10</div>
<div class="a t" style="left:1249px;top:751px;font-size:12px;letter-spacing:-0.3px;color:#fff">06/03/2019</div>
<svg class="a" style="left:1324px;top:740px" width="26" height="24" viewBox="0 0 26 24">
 <path d="M1 1 H17 V12 H7 L4 15 V12 H1 Z" fill="#fff"/><path d="M3.5 4 H14.5 M3.5 6.5 H14.5 M3.5 9 H11" stroke="#080d17" stroke-width="1.1"/>
 <circle cx="17" cy="15.5" r="7.6" fill="#3b3b3b" stroke="#080d17" stroke-width="1"/>
 <path d="M15.6 13.2 L17.8 11.6 V19.6" fill="none" stroke="#fff" stroke-width="1.5"/>
</svg>
<div class="a" style="left:1361px;top:728px;width:1px;height:40px;background:#5b5e66"></div>

</body></html>
